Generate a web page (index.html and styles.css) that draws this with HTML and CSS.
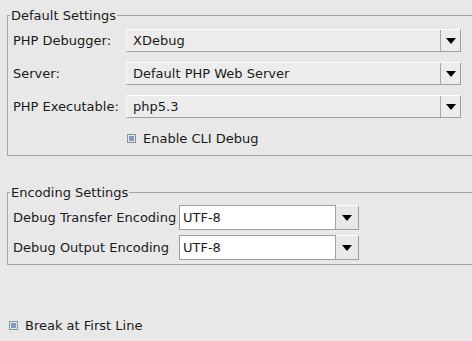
FILE: index.html
```html
<!DOCTYPE html>
<html>
	<head>
		<meta charset="utf-8">
		<title>Debug Settings</title>
		<link rel="stylesheet" href="styles.css">
	</head>
	<body>
		<!-- 默认设置 -->
		<fieldset class="group group-default">
			<legend>Default Settings</legend>
			<div class="rows">
				<label class="lbl">PHP Debugger:</label>
				<div class="combo"><span class="value">XDebug</span><span class="arrow"></span></div>
				<label class="lbl">Server:</label>
				<div class="combo"><span class="value">Default PHP Web Server</span><span class="arrow"></span></div>
				<label class="lbl">PHP Executable:</label>
				<div class="combo"><span class="value">php5.3</span><span class="arrow"></span></div>
			</div>
			<div class="check check-cli"><span class="box"></span>Enable CLI Debug</div>
		</fieldset>

		<!-- 编码设置 -->
		<fieldset class="group group-encoding">
			<legend>Encoding Settings</legend>
			<div class="rows rows-enc">
				<label class="lbl">Debug Transfer Encoding</label>
				<div class="combo-edit"><span class="field">UTF-8</span><span class="btn"><span class="arrow"></span></span></div>
				<label class="lbl">Debug Output Encoding</label>
				<div class="combo-edit"><span class="field">UTF-8</span><span class="btn"><span class="arrow"></span></span></div>
			</div>
		</fieldset>

		<div class="check check-break"><span class="box"></span>Break at First Line</div>
	</body>
</html>
```

FILE: styles.css
```css
body {
	margin: 0;
	background-color: #e8e8e8;
	font-family: "DejaVu Sans", sans-serif;
	font-size: 13px;
	color: #1a1a1a;
	overflow: hidden;
}

/* 分组框 */
.group {
	margin: 8px 0 0 7px;
	padding: 0 0 0 5px;
	border: 1px solid #a4a4a4;
	border-right: none;
	min-width: 0;
	box-sizing: border-box;
}

.group legend {
	padding: 0 1px;
	margin-left: -3px;
	line-height: 15px;
}

.group-default {
	height: 148px;
}

.group-encoding {
	margin-top: 29px;
	height: 80px;
}

/* 表单行 */
.rows {
	display: grid;
	grid-template-columns: 113px 335px;
	row-gap: 10px;
	align-items: center;
	margin-top: 6px;
}

.rows-enc {
	grid-template-columns: 166px 180px;
	row-gap: 5px;
	margin-top: 5px;
}

.lbl {
	white-space: nowrap;
}

/* 下拉框 */
.combo {
	display: flex;
	align-items: center;
	height: 23px;
	box-sizing: border-box;
	background-color: #ececec;
	border-top: 1px solid #ffffff;
	border-left: 1px solid #f8f8f8;
	border-bottom: 1px solid #a0a0a0;
	border-right: 1px solid #a0a0a0;
}

.combo .value {
	flex: 1;
	padding-left: 6px;
}

.combo > .arrow {
	width: 20px;
	height: 100%;
	border-left: 1px solid #a8a8a8;
	box-sizing: border-box;
}

.arrow {
	display: flex;
	align-items: center;
	justify-content: center;
}

.arrow::after {
	content: "";
	display: block;
	border-left: 5px solid transparent;
	border-right: 5px solid transparent;
	border-top: 6px solid #000;
}

/* 可编辑下拉框 */
.combo-edit {
	display: flex;
	height: 25px;
}

.combo-edit .field {
	flex: 1;
	background-color: #ffffff;
	border: 1px solid #a0a0a0;
	padding-left: 3px;
	line-height: 23px;
}

.combo-edit .btn {
	width: 23px;
	box-sizing: border-box;
	background-color: #e8e8e8;
	border-top: 1px solid #ffffff;
	border-bottom: 1px solid #a0a0a0;
	border-right: 1px solid #a0a0a0;
	display: flex;
	align-items: center;
	justify-content: center;
}

/* 复选框 */
.check {
	display: flex;
	align-items: center;
	height: 15px;
}

.check .box {
	width: 9px;
	height: 9px;
	box-sizing: border-box;
	border: 1px solid #8a909b;
	background-color: #7f9bc8;
	box-shadow: inset 0 0 0 1px #e4e8f0;
	margin-right: 7px;
}

.check-cli {
	margin: 13px 0 0 114px;
}

.check-break {
	margin: 53px 0 0 9px;
}
```
